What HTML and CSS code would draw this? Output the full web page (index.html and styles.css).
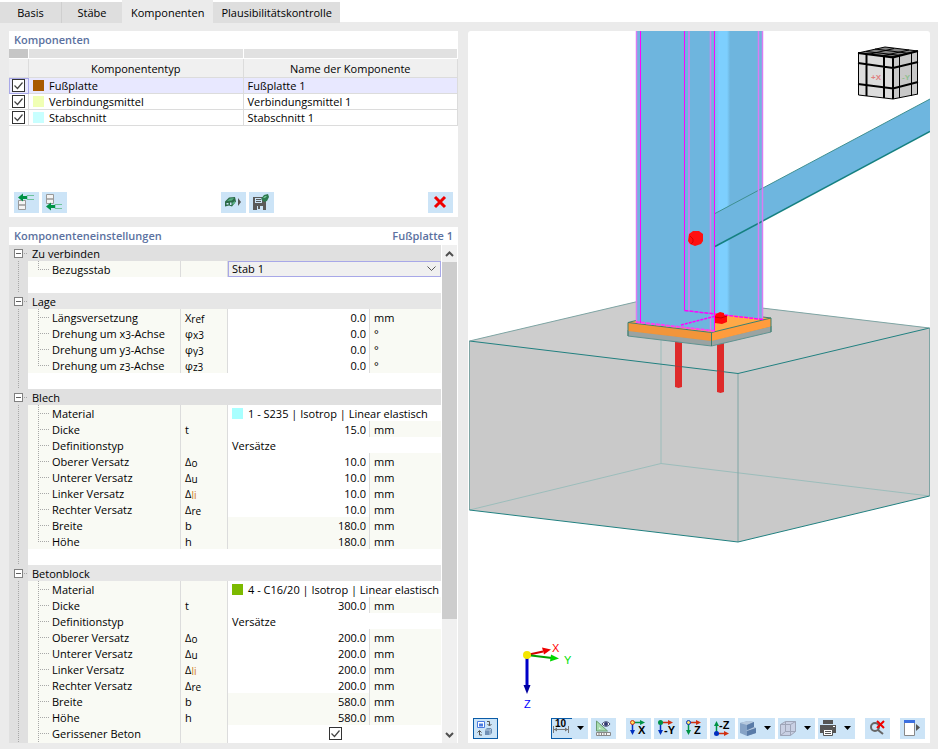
FILE: index.html
```
<!DOCTYPE html>
<html lang="de">
<head>
    <meta charset="UTF-8">
    <meta name="viewport" content="width=device-width, initial-scale=1.0">
    <title>Komponenten</title>
    <link rel="stylesheet" href="styles.css">
</head>
<body>

    <nav class="tabs">
        <button type="button" class="tab">Basis</button>
        <button type="button" class="tab">Stäbe</button>
        <button type="button" class="tab active">Komponenten</button>
        <button type="button" class="tab">Plausibilitätskontrolle</button>
    </nav>

    <main class="workspace">
        <div class="sidebar">

            <section class="panel components">
                <h2 class="panel-title">Komponenten</h2>
                <table class="component-table">
                    <colgroup>
                        <col class="col-check">
                        <col>
                        <col>
                    </colgroup>
                    <thead>
                        <tr class="strip"><td class="strip-active"></td><td></td><td></td></tr>
                        <tr><th></th><th>Komponententyp</th><th>Name der Komponente</th></tr>
                    </thead>
                    <tbody>
                        <tr class="selected">
                            <td><input type="checkbox" class="check" aria-label="Fußplatte 1" checked></td>
                            <td><span class="swatch brown"></span>Fußplatte</td>
                            <td>Fußplatte 1</td>
                        </tr>
                        <tr>
                            <td><input type="checkbox" class="check" aria-label="Verbindungsmittel 1" checked></td>
                            <td><span class="swatch lime"></span>Verbindungsmittel</td>
                            <td>Verbindungsmittel 1</td>
                        </tr>
                        <tr>
                            <td><input type="checkbox" class="check" aria-label="Stabschnitt 1" checked></td>
                            <td><span class="swatch ice"></span>Stabschnitt</td>
                            <td>Stabschnitt 1</td>
                        </tr>
                    </tbody>
                </table>
                <div class="component-actions">
                    <div class="group">
                        <button type="button" class="tool" aria-label="Davor einfügen">
                            <svg width="25" height="21" viewBox="0 0 25 21">
                                <path d="M4.500 8.500h7v4.500h-7zM4.500 13h7v4.500h-7z" fill="#f4f4f4" stroke="#999"/>
                                <path d="M20 3.500h-7v4h7" fill="none" stroke="#6fc39b"/>
                                <path d="M4 5.500l5-4v2.500h4v3h-4v2.500z" fill="#009245"/>
                            </svg>
                        </button>
                        <button type="button" class="tool" aria-label="Danach einfügen">
                            <svg width="25" height="21" viewBox="0 0 25 21">
                                <path d="M4.500 2.500h7v4.500h-7zM4.500 7h7v4.500h-7z" fill="#f4f4f4" stroke="#999"/>
                                <path d="M20 12.500h-7v4h7" fill="none" stroke="#6fc39b"/>
                                <path d="M4 14.500l5-4v2.500h4v3h-4v2.500z" fill="#009245"/>
                            </svg>
                        </button>
                    </div>
                    <div class="group">
                        <button type="button" class="tool" aria-label="Aus Bibliothek laden">
                            <svg width="25" height="21" viewBox="0 0 25 21">
                                <path d="M4 9.500l4-4 6-.5 1 4.500-4 5-3-1-4 1z" fill="#2c6b48"/>
                                <path d="M6 9l3-2.500 4-.5-2 2.500zM11 11l3-2v2l-2 2z" fill="#58b083"/>
                                <path d="M5.500 11h2v1.500h-2zM9 10.500h1.500v2.500H9z" fill="#cce4f7"/>
                                <path d="M17 6l3 4-3 4z" fill="#555"/>
                            </svg>
                        </button>
                        <button type="button" class="tool" aria-label="In Bibliothek speichern">
                            <svg width="25" height="21" viewBox="0 0 25 21">
                                <path d="M4 5h10l3 3v10h-13z" fill="#5a5a5a"/>
                                <path d="M6 6h7v5h-7zM8 14h6v4h-6z" fill="#cce4f7"/>
                                <path d="M7 7h5v1h-5zM7 9h5v1h-5zM9 14h2v3h-2z" fill="#5a5a5a"/>
                                <path d="M12 7l3-4 4-1 1 3-2 4-3 1z" fill="#2f7a50"/>
                                <path d="M14 6l2-2 2 0-2 2z" fill="#74c69a"/>
                            </svg>
                        </button>
                    </div>
                    <button type="button" class="tool" aria-label="Löschen">
                        <svg width="25" height="21" viewBox="0 0 25 21">
                            <path d="M7 5l10 10M17 5L7 15" stroke="#f00000" stroke-width="3"/>
                        </svg>
                    </button>
                </div>
            </section>

            <section class="panel settings">
                <header class="settings-head">
                    <h2 class="panel-title">Komponenteneinstellungen</h2>
                    <h2 class="panel-title">Fußplatte 1</h2>
                </header>
                <div class="settings-body">
                    <div class="settings-scroll">
                        <table class="props">
                            <colgroup>
                                <col class="col-gutter">
                                <col class="col-name">
                                <col class="col-symbol">
                                <col>
                                <col class="col-unit">
                            </colgroup>
                            <tbody>
                                <tr class="category"><th><button type="button" class="expander" aria-label="Zu verbinden"></button></th><th colspan="4">Zu verbinden</th></tr>
                                <tr class="last"><td></td><td><label for="member">Bezugsstab</label></td><td></td>
                                    <td colspan="2" class="field"><select id="member" class="member"><option>Stab 1</option></select></td></tr>
                                <tr class="spacer"><td></td><td colspan="4"></td></tr>
                            </tbody>
                            <tbody>
                                <tr class="category light"><th><button type="button" class="expander" aria-label="Lage"></button></th><th colspan="4">Lage</th></tr>
                                <tr><td></td><td>Längsversetzung</td><td>X<sub>ref</sub></td><td>0.0</td><td>mm</td></tr>
                                <tr><td></td><td>Drehung um x<sub>3</sub>-Achse</td><td>φ<sub>x3</sub></td><td>0.0</td><td>°</td></tr>
                                <tr><td></td><td>Drehung um y<sub>3</sub>-Achse</td><td>φ<sub>y3</sub></td><td>0.0</td><td>°</td></tr>
                                <tr class="last"><td></td><td>Drehung um z<sub>3</sub>-Achse</td><td>φ<sub>z3</sub></td><td>0.0</td><td>°</td></tr>
                                <tr class="spacer"><td></td><td colspan="4"></td></tr>
                            </tbody>
                            <tbody>
                                <tr class="category"><th><button type="button" class="expander" aria-label="Blech"></button></th><th colspan="4">Blech</th></tr>
                                <tr><td></td><td>Material</td><td></td><td colspan="2" class="text"><span class="swatch cyan"></span>1 - S235 | Isotrop | Linear elastisch</td></tr>
                                <tr><td></td><td>Dicke</td><td>t</td><td>15.0</td><td>mm</td></tr>
                                <tr><td></td><td>Definitionstyp</td><td></td><td colspan="2" class="text">Versätze</td></tr>
                                <tr><td></td><td>Oberer Versatz</td><td>Δ<sub>o</sub></td><td>10.0</td><td>mm</td></tr>
                                <tr><td></td><td>Unterer Versatz</td><td>Δ<sub>u</sub></td><td>10.0</td><td>mm</td></tr>
                                <tr><td></td><td>Linker Versatz</td><td>Δ<sub class="amber">li</sub></td><td>10.0</td><td>mm</td></tr>
                                <tr><td></td><td>Rechter Versatz</td><td>Δ<sub>re</sub></td><td>10.0</td><td>mm</td></tr>
                                <tr class="readonly"><td></td><td>Breite</td><td>b</td><td>180.0</td><td>mm</td></tr>
                                <tr class="readonly last"><td></td><td>Höhe</td><td>h</td><td>180.0</td><td>mm</td></tr>
                                <tr class="spacer"><td></td><td colspan="4"></td></tr>
                            </tbody>
                            <tbody>
                                <tr class="category light"><th><button type="button" class="expander" aria-label="Betonblock"></button></th><th colspan="4">Betonblock</th></tr>
                                <tr><td></td><td>Material</td><td></td><td colspan="2" class="text"><span class="swatch green"></span>4 - C16/20 | Isotrop | Linear elastisch</td></tr>
                                <tr><td></td><td>Dicke</td><td>t</td><td>300.0</td><td>mm</td></tr>
                                <tr><td></td><td>Definitionstyp</td><td></td><td colspan="2" class="text">Versätze</td></tr>
                                <tr><td></td><td>Oberer Versatz</td><td>Δ<sub>o</sub></td><td>200.0</td><td>mm</td></tr>
                                <tr><td></td><td>Unterer Versatz</td><td>Δ<sub>u</sub></td><td>200.0</td><td>mm</td></tr>
                                <tr><td></td><td>Linker Versatz</td><td>Δ<sub class="amber">li</sub></td><td>200.0</td><td>mm</td></tr>
                                <tr><td></td><td>Rechter Versatz</td><td>Δ<sub>re</sub></td><td>200.0</td><td>mm</td></tr>
                                <tr class="readonly"><td></td><td>Breite</td><td>b</td><td>580.0</td><td>mm</td></tr>
                                <tr class="readonly"><td></td><td>Höhe</td><td>h</td><td>580.0</td><td>mm</td></tr>
                                <tr><td></td><td><label for="cracked">Gerissener Beton</label></td><td></td>
                                    <td colspan="2" class="center"><input type="checkbox" id="cracked" class="check" checked></td></tr>
                                <tr><td></td><td></td><td></td><td colspan="2"></td></tr>
                            </tbody>
                        </table>
                    </div>
                    <div class="scrollbar">
                        <button type="button" class="scroll-button" aria-label="Nach oben">
                            <svg width="9" height="6" viewBox="0 0 9 6"><path d="M1 5l3.500-3.500L8 5" fill="none" stroke="#505050" stroke-width="2"/></svg>
                        </button>
                        <div class="track"><div class="thumb"></div></div>
                        <button type="button" class="scroll-button" aria-label="Nach unten">
                            <svg width="9" height="6" viewBox="0 0 9 6"><path d="M1 1l3.500 3.500L8 1" fill="none" stroke="#505050" stroke-width="2"/></svg>
                        </button>
                    </div>
                </div>
            </section>
        </div>

        <section class="panel view">
            <svg class="scene" viewBox="468 31 462 682" preserveAspectRatio="xMidYMin slice">
                <defs>
                    <linearGradient id="shine">
                        <stop offset="0" stop-color="#74c0ea"/>
                        <stop offset="0.300" stop-color="#7dcffe"/>
                        <stop offset="0.800" stop-color="#7dcffe"/>
                        <stop offset="1" stop-color="#6eb6df"/>
                    </linearGradient>
                </defs>

                <!-- concrete block -->
                <path d="M469.500 341L661 296L929.500 328V496L738 542L469.500 510z" fill="#c9c9c9"/>
                <path d="M469.500 341L661 296L929.500 328L738 373.500z" fill="#cdcdcd"/>
                <path d="M661 296V463.500L469.500 510M661 463.500L929.500 496" fill="none" stroke="#9cbdbb"/>
                <path d="M469.500 341V510M738 373.500V542M929.500 328V496" fill="none" stroke="#7fa5a4"/>
                <path d="M469.500 341L738 373.500L929.500 328" fill="none" stroke="#218080"/>
                <path d="M469.500 341L661 296L929.500 328" fill="none" stroke="#7fa5a4"/>
                <path d="M469.500 510L738 542L929.500 496" fill="none" stroke="#218080"/>

                <!-- anchors -->
                <path d="M675 336h7v51l-3.500 1l-3.500-1zM717 338h7v54l-3.500 1l-3.500-1z" fill="#de2a2a"/>
                <path d="M675 366l7 1M717 370.500l7 1" stroke="#a04040"/>

                <!-- grout and base plate -->
                <path d="M628 330L711.500 340L771 326V332L711.500 346L628 336z" fill="#9aa3a2" stroke="#5f9391"/>
                <path d="M628 322.500L692 308L771 318L711.500 332.500z" fill="#ffa947"/>
                <path d="M628 322.500L711.500 332.500V341L628 331z" fill="#f2953a"/>
                <path d="M711.500 332.500L771 318V326.500L711.500 341z" fill="#ff9c3d"/>
                <path d="M636 320.500l-8 2L711.500 332.500L771 318l-8-1M711.500 332.500V346M628 322.500V336M771 318V332" fill="none" stroke="#3f7f6c"/>

                <!-- column -->
                <path d="M636 31H763V319L715 313V331L636 323z" fill="#6eb5de"/>
                <path d="M715 31H730V315L715 313z" fill="url(#shine)"/>
                <path d="M715 213.500L930 99V131.500L715 246.500z" fill="#6eb6df"/>
                <path d="M715 213.500L930 99" stroke="#3f8f90"/>
                <path d="M715 246.500L930 131.500" stroke="#158080" stroke-width="1.500"/>
                <g fill="none">
                    <path d="M636.500 31V323M689 31V311M710.500 31V330M758.500 31V319M762.500 31V319" stroke="#d97cf2" stroke-width="1.500"/>
                    <path d="M640.500 31V323M684.500 31V310.500M714.500 31V331" stroke="#ff00ff"/>
                    <path d="M684.500 310.500L763 319.500" stroke="#ff00ff" stroke-dasharray="4 1" stroke-width="1.500"/>
                    <path d="M636 322L714.500 331" stroke="#ff40f0" stroke-dasharray="4 1" stroke-width="2"/>
                    <path d="M681 325L722 314.500" stroke="#ff00ff" stroke-dasharray="3 1" stroke-width="1.500"/>
                </g>

                <!-- bolts -->
                <path d="M689 234l4-3h6l4 3v7l-2 3l-6 2l-5-2l-2-3z" fill="#ff1010"/>
                <path d="M690 236l3 3v3l-2 2" fill="none" stroke="#d80000"/>
                <path d="M716 314l4-2l4 1v2l3 1v6l-5 2l-7-1v-7z" fill="#ff0808"/>
                <path d="M715 317l6 1l6-2" fill="none" stroke="#c80000"/>

                <!-- navigation cube -->
                <path d="M858 53L885 47L918 51V94L893 99L858 95z" fill="#dcdcdc"/>
                <path d="M858 53L885 47L918 51L893 56.500z" fill="#858585"/>
                <path d="M893 57L918 51V94L893 99z" fill="#c8c8c8"/>
                <path d="M858 53L885 47L918 51L893 56.500zM866 51.500L901 55.500M875 49L910 53.500M868 54.500L894 48.500M884 55.500L909 50" fill="none" stroke="#000"/>
                <path d="M858 53L893 57.500L918 51M858 63L893 68L918 62M858 84L893 88.500L918 82M866.500 54V96M884 56V98M893 57V99" fill="none" stroke="#000" stroke-width="2"/>
                <path d="M858.500 53V95L893 99L918 94M917.500 51V94M899.500 55V98M911.500 53V96" fill="none" stroke="#000"/>
                <text x="871" y="80" class="cube-x">+X</text>
                <text x="902" y="80" class="cube-y">-Y</text>

                <!-- global axes -->
                <path d="M527 655L543 651.500" stroke="#d40000" stroke-width="2"/>
                <path d="M542 647.500l9 2l-7 5z" fill="#ee0000"/>
                <path d="M527 655L552 658" stroke="#00a000" stroke-width="2"/>
                <path d="M551 654.500l8 4l-9 3z" fill="#00d800"/>
                <path d="M527 656V686" stroke="#0000c8" stroke-width="3"/>
                <path d="M523.500 685h7l-3.500 9z" fill="#0000a0"/>
                <circle cx="527" cy="655" r="4" fill="#f4e600"/>
                <text x="552" y="652" class="axis" fill="#ff0000">X</text>
                <text x="564" y="664" class="axis" fill="#00e000">Y</text>
                <text x="524" y="708" class="axis" fill="#0000ff">Z</text>
            </svg>

            <div class="view-tools">
                <button type="button" class="tool framed first" aria-label="Ansicht wechseln">
                    <svg width="23" height="19" viewBox="1 1 23 19">
                        <path d="M4.500 3.500h7v6h-7z" fill="#fff" stroke="#4a7be0"/>
                        <path d="M6 5.500h4v3h-4z" fill="#4a7be0"/>
                        <path d="M12 12l2-2h5v5l-2 2h-5z" fill="#6f8fb4"/>
                        <path d="M12 12h5v5M17 12l2-2" fill="none" stroke="#b7cbe0"/>
                        <path d="M14 3.500h2.500v4M14.500 6l2 2l2-2M9 17h-2.500v-4M4.500 14.500l2-2l2 2" fill="none" stroke="#555"/>
                    </svg>
                </button>
                <div class="group">
                    <button type="button" class="tool wide half-framed" aria-label="Bemaßung">
                        <svg width="36" height="21" viewBox="0 0 36 21">
                            <path d="M2.500 8v7M17.500 8v7M3 11.500h14" fill="none" stroke="#777"/>
                            <path d="M3 11.500l3-2v4zM17 11.500l-3-2v4z" fill="#777"/>
                            <text x="4" y="9" class="icon-text small">10</text>
                            <path d="M26 8h7l-3.500 4z" fill="#000"/>
                        </svg>
                    </button>
                    <button type="button" class="tool" aria-label="Messen">
                        <svg width="25" height="21" viewBox="0 0 25 21">
                            <path d="M5.500 3v10h11z" fill="#a8dcae" stroke="#6a9b70"/>
                            <path d="M8 9v2h2z" fill="#e5f5ea"/>
                            <path d="M5.500 14.500h14v3h-14z" fill="#f5f5f5" stroke="#888"/>
                            <path d="M8 15v2M10.500 15v2M13 15v2M15.500 15v2" stroke="#888"/>
                            <path d="M11 6c2-3 6-3 8 0c-2 3-6 3-8 0z" fill="#fff" stroke="#444a70"/>
                            <circle cx="15" cy="6" r="2" fill="#303870"/>
                        </svg>
                    </button>
                </div>
                <div class="group">
                    <button type="button" class="tool" aria-label="Ansicht X">
                        <svg width="25" height="21" viewBox="0 0 25 21">
                            <path d="M6.500 5v10" stroke="#0030c0" stroke-width="1.500"/><path d="M4 12h5l-2.500 5z" fill="#0030c0"/>
                            <path d="M7 4.500h9" stroke="#009245" stroke-width="1.500"/><path d="M14 2l5 2.500l-5 2.500z" fill="#009245"/>
                            <circle cx="6.500" cy="4.500" r="2" fill="#ffe060" stroke="#d03010"/>
                            <text x="12" y="16" class="icon-text">X</text>
                        </svg>
                    </button>
                    <button type="button" class="tool" aria-label="Ansicht -Y">
                        <svg width="25" height="21" viewBox="0 0 25 21">
                            <path d="M6.500 5v10" stroke="#0030c0" stroke-width="1.500"/><path d="M4 12h5l-2.500 5z" fill="#0030c0"/>
                            <path d="M7 4.500h9" stroke="#d03010" stroke-width="1.500"/><path d="M14 2l5 2.500l-5 2.500z" fill="#d03010"/>
                            <circle cx="6.500" cy="4.500" r="2.500" fill="#009245"/>
                            <text x="10" y="16" class="icon-text">-Y</text>
                        </svg>
                    </button>
                    <button type="button" class="tool" aria-label="Ansicht Z">
                        <svg width="25" height="21" viewBox="0 0 25 21">
                            <path d="M6.500 5v10" stroke="#009245" stroke-width="1.500"/><path d="M4 12h5l-2.500 5z" fill="#009245"/>
                            <path d="M7 4.500h9" stroke="#d03010" stroke-width="1.500"/><path d="M14 2l5 2.500l-5 2.500z" fill="#d03010"/>
                            <circle cx="6.500" cy="4.500" r="2" fill="#ffe060" stroke="#0030c0"/>
                            <text x="12" y="16" class="icon-text">Z</text>
                        </svg>
                    </button>
                    <button type="button" class="tool" aria-label="Ansicht -Z">
                        <svg width="25" height="21" viewBox="0 0 25 21">
                            <path d="M6.500 15v-9" stroke="#009245" stroke-width="1.500"/><path d="M4 8h5l-2.500-5z" fill="#009245"/>
                            <path d="M7 15.500h9" stroke="#d03010" stroke-width="1.500"/><path d="M14 13l5 2.500l-5 2.500z" fill="#d03010"/>
                            <circle cx="6.500" cy="15.500" r="2.500" fill="#0030c0"/>
                            <text x="9" y="11" class="icon-text">-Z</text>
                        </svg>
                    </button>
                    <button type="button" class="tool wide" aria-label="Darstellung">
                        <svg width="37" height="21" viewBox="0 0 37 21">
                            <path d="M2 5l8-2l6 1v5l2 1v5l-9 3l-7-3z" fill="#86a3c6"/>
                            <path d="M2 5l8-2l6 1l-7 3zM8 13l8-4l2 1l-8 3z" fill="#b6c9de"/>
                            <path d="M9 7l7-3v5l-7 3zM9 13l9-3v5l-9 3z" fill="#5a7ca8"/>
                            <path d="M26 8h7l-3.500 4z" fill="#000"/>
                        </svg>
                    </button>
                    <button type="button" class="tool wide" aria-label="Ansichtswürfel">
                        <svg width="37" height="21" viewBox="0 0 37 21">
                            <path d="M2.500 6.500l5-3h10v10l-5 4h-10z" fill="#c9d0e4"/>
                            <path d="M2.500 6.500h10v11h-10zM7.500 3.500h10v10h-10zM2.500 6.500l5-3M12.500 6.500l5-3M12.500 17.500l5-4M2.500 17.500l5-4" fill="none" stroke="#9ea5b8"/>
                            <path d="M26 8h7l-3.500 4z" fill="#000"/>
                        </svg>
                    </button>
                    <button type="button" class="tool wide" aria-label="Drucken">
                        <svg width="37" height="21" viewBox="0 0 37 21">
                            <path d="M5 2h10v4h-10zM2 7h16v8h-16z" fill="#555"/>
                            <path d="M5.500 11.500h9v6h-9z" fill="#fff" stroke="#555"/>
                            <path d="M7 13.500h6M7 15.500h6" stroke="#555"/>
                            <path d="M15 8.500h2" stroke="#fff"/>
                            <path d="M26 8h7l-3.500 4z" fill="#000"/>
                        </svg>
                    </button>
                </div>
                <button type="button" class="tool" aria-label="Zoom zurücksetzen">
                    <svg width="25" height="21" viewBox="0 0 25 21">
                        <circle cx="10" cy="9" r="4" fill="none" stroke="#666" stroke-width="2"/>
                        <path d="M13 12l5 4" stroke="#666" stroke-width="2"/>
                        <path d="M12 3l7 7M19 3l-7 7" stroke="#f00000" stroke-width="2"/>
                    </svg>
                </button>
                <button type="button" class="tool" aria-label="Fenster">
                    <svg width="25" height="21" viewBox="0 0 25 21">
                        <path d="M4.500 2.500h10v15h-10z" fill="#fff" stroke="#888"/>
                        <path d="M4 2h11v3h-11z" fill="#3b6fe0"/>
                        <path d="M16 6l4 3.500l-4 3.500z" fill="#555"/>
                    </svg>
                </button>
            </div>
        </section>
    </main>

</body>
</html>
```
FILE: styles.css
```
* {
    box-sizing: border-box;
}
body {
    margin: 0;
    height: 100vh;
    display: flex;
    flex-direction: column;
    background-color: #ebebeb;
    color: black;
    font-family: 'Open Sans', 'Noto Sans', sans-serif;
    font-size: 11px;
    line-height: 16px;
    overflow: hidden;
}
button, select, input {
    font: inherit;
    color: inherit;
    margin: 0;
    padding: 0;
    border: none;
    border-radius: 0;
}
svg {
    display: block;
}

/* tabs */
.tabs {
    display: flex;
    align-items: flex-start;
    height: 22px;
    background-color: white;
}
.tab {
    height: 21px;
    min-width: 61px;
    margin-top: 2px;
    padding: 0 8px;
    background-color: #dedede;
}
.tab + .tab {
    border-left: 1px solid #cfcfcf;
}
.tab.active {
    height: 23px;
    margin-top: 0;
    padding: 2px 9px 0;
    border: none;
    background-color: #ebebeb;
}
.tab.active + .tab {
    border: none;
}

/* layout */
.workspace {
    flex: 1;
    min-height: 0;
    display: grid;
    grid-template-columns: 449fr 462fr;
    gap: 10px;
    padding: 9px 8px 6px 9px;
}
.sidebar {
    display: flex;
    flex-direction: column;
    gap: 10px;
    min-width: 0;
    min-height: 0;
}
.panel {
    background-color: white;
}
.panel-title {
    margin: 0;
    padding: 0 5px;
    font-size: 11px;
    font-weight: 600;
    line-height: 18px;
    color: #5b71a0;
}

/* component list */
.components {
    flex: 0 0 186px;
    display: flex;
    flex-direction: column;
}
.component-table, .props {
    width: 100%;
    table-layout: fixed;
    border-collapse: separate;
    border-spacing: 0;
}
.component-table th, .component-table td, .props th, .props td {
    height: 16px;
    padding: 0 4px;
    font-weight: normal;
    line-height: 15px;
    text-align: left;
    white-space: nowrap;
    overflow: hidden;
}
.props th, .props td {
    padding-top: 1px;
}
.component-table th, .component-table td {
    border-right: 1px solid #dcdcdc;
    border-bottom: 1px solid #dcdcdc;
}
.component-table th {
    height: 19px;
    text-align: center;
    background-color: #f0f0f0;
}
.component-table .strip td {
    height: 10px;
    border-bottom-color: white;
    border-right-color: white;
    background-color: #e1e1e1;
}
.component-table .strip .strip-active {
    background-color: #c6c6c6;
}
.component-table td:first-child {
    padding: 0 3px;
}
.component-table .selected td {
    background-color: #e8e8ff;
}
.component-table .selected td:first-child {
    outline: 1px solid #a8a8e8;
    outline-offset: -1px;
}
.col-check {
    width: 20px;
}
.swatch {
    display: inline-block;
    width: 11px;
    height: 11px;
    margin-right: 5px;
    vertical-align: -1px;
}
.brown { background-color: #a85a00; }
.lime { background-color: #f0ffb4; }
.ice { background-color: #c8ffff; }
.cyan { background-color: #a8ffff; }
.green { background-color: #7cba00; }
.check {
    appearance: none;
    display: block;
    width: 13px;
    height: 13px;
    border: 1px solid #333;
    background-color: white;
}
.check:checked {
    background-image: url("data:image/svg+xml,%3Csvg xmlns='http://www.w3.org/2000/svg' viewBox='0 0 11 11'%3E%3Cpath d='M1.500 5.500l3 3l5-6' fill='none' stroke='%23444' stroke-width='1.200'/%3E%3C/svg%3E");
}
.component-actions {
    display: flex;
    justify-content: space-between;
    margin-top: auto;
    padding: 0 5px 4px;
}
.group {
    display: flex;
    gap: 3px;
}
.tool {
    width: 25px;
    height: 21px;
    background-color: #cce4f7;
}
.tool.wide {
    width: 37px;
}

/* component settings */
.settings {
    flex: 1;
    min-height: 0;
    display: flex;
    flex-direction: column;
}
.settings-head {
    display: flex;
    justify-content: space-between;
}
.settings-body {
    flex: 1;
    min-height: 0;
    display: flex;
    gap: 1px;
}
.settings-scroll {
    flex: 1;
    overflow: hidden;
}
.col-gutter { width: 19px; }
.col-name { width: 153px; }
.col-symbol { width: 47px; }
.col-unit { width: 72px; }
.props sub {
    font-size: 10px;
    line-height: 0;
    vertical-align: -1px;
}
.props .amber {
    color: #d07a1c;
}
.props td:first-child {
    background: repeating-linear-gradient(#a8a8a8 0 1px, transparent 1px 2px) 9px 0 / 1px 100% no-repeat #e0e0e0;
}
.props td:nth-child(2) {
    padding-left: 24px;
    border-right: 1px solid #dcdcdc;
    background:
        repeating-linear-gradient(#a8a8a8 0 1px, transparent 1px 2px) 10px 0 / 1px 100% no-repeat,
        repeating-linear-gradient(90deg, #a8a8a8 0 1px, transparent 1px 2px) 10px 8px / 11px 1px no-repeat #f9faf4;
}
.props .last td:nth-child(2) {
    background-size: 1px 8px, 11px 1px;
}
.props td:nth-child(3) {
    border-right: 1px solid #dcdcdc;
    background-color: #f9faf4;
}
.props td:nth-child(4) {
    padding-right: 3px;
    text-align: right;
}
.props td:nth-child(5) {
    border-left: 1px solid #dcdcdc;
    background-color: #f9faf4;
}
.props .readonly td:nth-child(4) {
    background-color: #f9faf4;
}
.props td.text {
    text-align: left;
}
.props td.field {
    padding: 0;
}
.props td.center .check {
    margin: 0 auto;
}
.props .spacer td:nth-child(2) {
    border: none;
    background: white;
}
.props .category th {
    background-color: #e0e0e0;
}
.props .light th {
    background-color: #e6e6e6;
}
.props .category th:first-child {
    padding: 0 0 0 5px;
    background: repeating-linear-gradient(90deg, #a8a8a8 0 1px, transparent 1px 2px) 15px 8px / 4px 1px no-repeat #e0e0e0;
}
.expander {
    display: block;
    width: 9px;
    height: 9px;
    border: 1px solid #808080;
    background: linear-gradient(#606060, #606060) center / 5px 1px no-repeat white;
}
.member {
    display: block;
    appearance: none;
    width: 100%;
    height: 16px;
    padding: 0 3px;
    border: 1px solid #a8a8e8;
    line-height: 14px;
    background: url("data:image/svg+xml,%3Csvg xmlns='http://www.w3.org/2000/svg' width='9' height='6'%3E%3Cpath d='M.5 .5l4 4l4-4' fill='none' stroke='%23555'/%3E%3C/svg%3E") right 4px center no-repeat #f0f0f0;
}
.scrollbar {
    width: 15px;
    margin-right: 1px;
    display: flex;
    flex-direction: column;
    background-color: #f0f0f0;
}
.scroll-button {
    height: 17px;
    display: flex;
    align-items: center;
    justify-content: center;
    background-color: #f0f0f0;
}
.track {
    flex: 1;
}
.thumb {
    height: 77%;
    background-color: #cdcdcd;
}

/* model view */
.view {
    display: flex;
    flex-direction: column;
    min-width: 0;
    min-height: 0;
    border-radius: 3px 3px 0 0;
    overflow: hidden;
}
.scene {
    flex: 1;
    width: 100%;
    min-height: 0;
}
.axis {
    font-family: 'Liberation Sans', sans-serif;
    font-size: 11px;
}
.cube-x, .cube-y {
    font-family: 'Liberation Sans', sans-serif;
    font-size: 8px;
    font-weight: bold;
    fill: #e08080;
}
.cube-y {
    fill: #90c090;
}
.view-tools {
    display: flex;
    gap: 10px;
    padding: 5px 5px 4px;
}
.view-tools .first {
    margin-right: auto;
}
.framed {
    border: 1px solid #0a5ca8;
}
.half-framed {
    background:
        linear-gradient(#0a5ca8, #0a5ca8) 0 0 / 21px 1px no-repeat,
        linear-gradient(#0a5ca8, #0a5ca8) 0 100% / 21px 1px no-repeat,
        linear-gradient(#0a5ca8, #0a5ca8) 0 0 / 1px 100% no-repeat #cce4f7;
}
.icon-text {
    font-family: 'Liberation Sans', sans-serif;
    font-size: 11px;
    font-weight: bold;
}
.icon-text.small {
    font-size: 10px;
}
```
